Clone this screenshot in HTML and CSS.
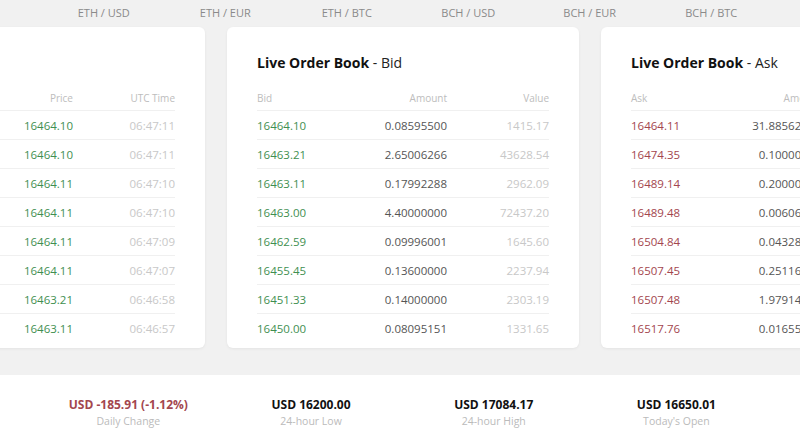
FILE: index.html
```html
<!DOCTYPE html>
<html>
<head>
<meta charset="utf-8">
<link rel="stylesheet" href="styles.css">
</head>
<body>
<nav class="tabs">
  <a class="tab">ETH / USD</a>
  <a class="tab">ETH / EUR</a>
  <a class="tab">ETH / BTC</a>
  <a class="tab">BCH / USD</a>
  <a class="tab">BCH / EUR</a>
  <a class="tab">BCH / BTC</a>
</nav>
<div class="viewport">
<main class="cards">
  <section class="card">
    <h2 class="title">&nbsp;</h2>
    <div class="table">
      <div class="row head"><span></span><span class="r">Price</span><span class="r">UTC Time</span></div>
      <div class="row"><span></span><span class="r green">16464.10</span><span class="r faint">06:47:11</span></div>
      <div class="row"><span></span><span class="r green">16464.10</span><span class="r faint">06:47:11</span></div>
      <div class="row"><span></span><span class="r green">16464.11</span><span class="r faint">06:47:10</span></div>
      <div class="row"><span></span><span class="r green">16464.11</span><span class="r faint">06:47:10</span></div>
      <div class="row"><span></span><span class="r green">16464.11</span><span class="r faint">06:47:09</span></div>
      <div class="row"><span></span><span class="r green">16464.11</span><span class="r faint">06:47:07</span></div>
      <div class="row"><span></span><span class="r green">16463.21</span><span class="r faint">06:46:58</span></div>
      <div class="row"><span></span><span class="r green">16463.11</span><span class="r faint">06:46:57</span></div>
    </div>
  </section>
  <section class="card">
    <h2 class="title"><b>Live Order Book</b> - Bid</h2>
    <div class="table">
      <div class="row head"><span>Bid</span><span class="r">Amount</span><span class="r">Value</span></div>
      <div class="row"><span class="green">16464.10</span><span class="r amt">0.08595500</span><span class="r faint">1415.17</span></div>
      <div class="row"><span class="green">16463.21</span><span class="r amt">2.65006266</span><span class="r faint">43628.54</span></div>
      <div class="row"><span class="green">16463.11</span><span class="r amt">0.17992288</span><span class="r faint">2962.09</span></div>
      <div class="row"><span class="green">16463.00</span><span class="r amt">4.40000000</span><span class="r faint">72437.20</span></div>
      <div class="row"><span class="green">16462.59</span><span class="r amt">0.09996001</span><span class="r faint">1645.60</span></div>
      <div class="row"><span class="green">16455.45</span><span class="r amt">0.13600000</span><span class="r faint">2237.94</span></div>
      <div class="row"><span class="green">16451.33</span><span class="r amt">0.14000000</span><span class="r faint">2303.19</span></div>
      <div class="row"><span class="green">16450.00</span><span class="r amt">0.08095151</span><span class="r faint">1331.65</span></div>
    </div>
  </section>
  <section class="card">
    <h2 class="title"><b>Live Order Book</b> - Ask</h2>
    <div class="table">
      <div class="row head"><span>Ask</span><span class="r">Amount</span><span class="r"></span></div>
      <div class="row"><span class="red">16464.11</span><span class="r amt">31.88562000</span><span class="r faint"></span></div>
      <div class="row"><span class="red">16474.35</span><span class="r amt">0.10000000</span><span class="r faint"></span></div>
      <div class="row"><span class="red">16489.14</span><span class="r amt">0.20000000</span><span class="r faint"></span></div>
      <div class="row"><span class="red">16489.48</span><span class="r amt">0.00606000</span><span class="r faint"></span></div>
      <div class="row"><span class="red">16504.84</span><span class="r amt">0.04328000</span><span class="r faint"></span></div>
      <div class="row"><span class="red">16507.45</span><span class="r amt">0.25116000</span><span class="r faint"></span></div>
      <div class="row"><span class="red">16507.48</span><span class="r amt">1.97914000</span><span class="r faint"></span></div>
      <div class="row"><span class="red">16517.76</span><span class="r amt">0.01655000</span><span class="r faint"></span></div>
    </div>
  </section>
</main>
</div>
<footer class="stats">
  <div class="stat"><div class="val red">USD -185.91 (-1.12%)</div><div class="lbl">Daily Change</div></div>
  <div class="stat"><div class="val">USD 16200.00</div><div class="lbl">24-hour Low</div></div>
  <div class="stat"><div class="val">USD 17084.17</div><div class="lbl">24-hour High</div></div>
  <div class="stat"><div class="val">USD 16650.01</div><div class="lbl">Today's Open</div></div>
</footer>
</body>
</html>
```

FILE: styles.css
```css
* { box-sizing: border-box; }
html, body { margin: 0; padding: 0; }
body {
  width: 800px;
  height: 445px;
  overflow: hidden;
  background: #f1f1f1;
  font-family: "Open Sans", "Liberation Sans", sans-serif;
  color: #555;
}
.tabs {
  display: flex;
  height: 26px;
  padding-left: 43px;
  align-items: center;
}
.tab {
  width: 121.5px;
  flex: none;
  text-align: center;
  font-size: 11px;
  color: #8a8a8a;
  line-height: 26px;
}
.viewport {
  width: 800px;
  height: 349px;
  overflow: hidden;
}
.cards {
  display: flex;
  gap: 22px;
  margin-left: -147px;
  padding-top: 1px;
  height: 349px;
}
.card {
  flex: none;
  width: 352px;
  height: 321px;
  background: #fff;
  border-radius: 6px;
  box-shadow: 0 1px 3px rgba(0,0,0,0.06);
  padding: 27px 30px 5px;
}
.title {
  margin: 0 0 13px;
  font-size: 14px;
  line-height: 18px;
  font-weight: 400;
  color: #222;
}
.title b { font-weight: 700; color: #111; }
.table { display: flex; flex-direction: column; }
.row {
  display: grid;
  grid-template-columns: 1fr 100px 102px;
  height: 29px;
  align-items: center;
  font-size: 11.5px;
  border-bottom: 1px solid #f0f0f0;
  white-space: nowrap;
}
.row:last-child { border-bottom: none; }
.row.head {
  height: 26px;
  font-size: 10px;
  color: #bdbdbd;
}
.r { text-align: right; }
.green { color: #3f8f51; }
.red { color: #a3464e; }
.amt { color: #555; }
.faint { color: #c8c8c8; }
.stats {
  background: #fff;
  height: 71px;
  display: grid;
  grid-template-columns: repeat(4, 182.7px);
  padding-left: 37px;
  padding-top: 4px;
  align-content: center;
}
.stat { text-align: center; }
.val {
  font-size: 12px;
  font-weight: 700;
  color: #111;
  line-height: 16px;
}
.val.red { color: #a3464e; }
.lbl {
  font-size: 10.5px;
  color: #bbb;
  line-height: 16px;
}
```
